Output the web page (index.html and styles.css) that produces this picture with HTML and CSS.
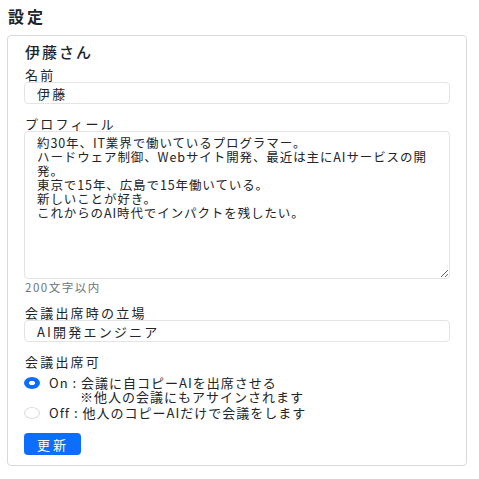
FILE: index.html
```html
<!DOCTYPE html>
<html lang="ja">
<head>
    <meta charset="UTF-8">
    <meta name="viewport" content="width=device-width, initial-scale=1.0">
    <title>設定</title>
    <link rel="stylesheet" href="styles.css">
</head>
<body>
    <h1 class="page-title">設定</h1>
    <div class="card">
        <h2 class="card-title">伊藤さん</h2>
        <div class="field">
            <label class="label">名前</label>
            <input class="input" type="text" value="伊藤">
        </div>
        <div class="field">
            <label class="label">プロフィール</label>
            <textarea class="input textarea">約30年、IT業界で働いているプログラマー。
ハードウェア制御、Webサイト開発、最近は主にAIサービスの開発。
東京で15年、広島で15年働いている。
新しいことが好き。
これからのAI時代でインパクトを残したい。</textarea>
            <div class="hint">200文字以内</div>
        </div>
        <div class="field">
            <label class="label">会議出席時の立場</label>
            <input class="input" type="text" value="AI開発エンジニア">
        </div>
        <div class="field">
            <label class="label label-gap">会議出席可</label>
            <label class="radio">
                <input type="radio" name="attend" checked>
                <span class="radio-text">
                    <span>On : 会議に自コピーAIを出席させる</span>
                    <span class="note">※他人の会議にもアサインされます</span>
                </span>
            </label>
            <label class="radio">
                <input type="radio" name="attend">
                <span class="radio-text">Off : 他人のコピーAIだけで会議をします</span>
            </label>
        </div>
        <button class="btn">更新</button>
    </div>
</body>
</html>
```

FILE: styles.css
```css
body {
	font-family: "Noto Sans CJK JP", "Liberation Sans", sans-serif;
	color: #212529;
	background-color: white;
	margin: 0;
	padding: 8px 12px 8px 7px;
	font-size: 13px;
}
.page-title {
	font-size: 16px;
	font-weight: bold;
	letter-spacing: 3px;
	margin: 0 0 11px 1px;
	line-height: 16px;
}
.card {
	border: 1px solid #d9d9d9;
	border-radius: 4px;
	padding: 6px 16px 10px 16px;
}
.card-title {
	font-size: 15px;
	font-weight: 500;
	letter-spacing: 2px;
	margin: 0 0 6px 1px;
	line-height: 20px;
}
.field {
	margin-bottom: 13px;
}
.label {
	display: block;
	line-height: 14px;
	margin: 0 0 0 1px;
	letter-spacing: 2.2px;
}
.label-gap {
	margin-bottom: 7px;
}
.input {
	display: block;
	width: 100%;
	box-sizing: border-box;
	border: 1px solid #e4e4e4;
	border-radius: 4px;
	padding: 2px 12px;
	height: 22px;
	font-family: inherit;
	font-size: 13px;
	color: #212529;
	letter-spacing: 2.2px;
}
.textarea {
	height: 148px;
	padding: 4px 12px;
	font-size: 12.5px;
	line-height: 14px;
	letter-spacing: 0.9px;
	resize: vertical;
}
.hint {
	color: #6c757d;
	font-size: 11.5px;
	line-height: 12px;
	letter-spacing: 1.5px;
	margin-top: 2px;
	margin-left: 1px;
}
.radio {
	display: flex;
	align-items: flex-start;
	line-height: 14px;
	letter-spacing: 1px;
	margin-bottom: 2px;
}
.radio input {
	appearance: none;
	margin: 1px 9px 0 0;
	width: 16px;
	height: 12px;
	border: 1px solid #dcdcdc;
	border-radius: 50%;
	background-color: white;
	flex-shrink: 0;
}
.radio input:checked {
	border-color: #0d6efd;
	background: radial-gradient(ellipse at center, white 0 28%, #0d6efd 34%);
}
.radio-text {
	display: flex;
	flex-direction: column;
}
.note {
	padding-left: 31px;
}
.btn {
	background-color: #0d6efd;
	color: white;
	border: none;
	border-radius: 4px;
	padding: 0 12px 0 13px;
	height: 22px;
	font-family: inherit;
	font-size: 13px;
	cursor: pointer;
	letter-spacing: 3px;
}
```
